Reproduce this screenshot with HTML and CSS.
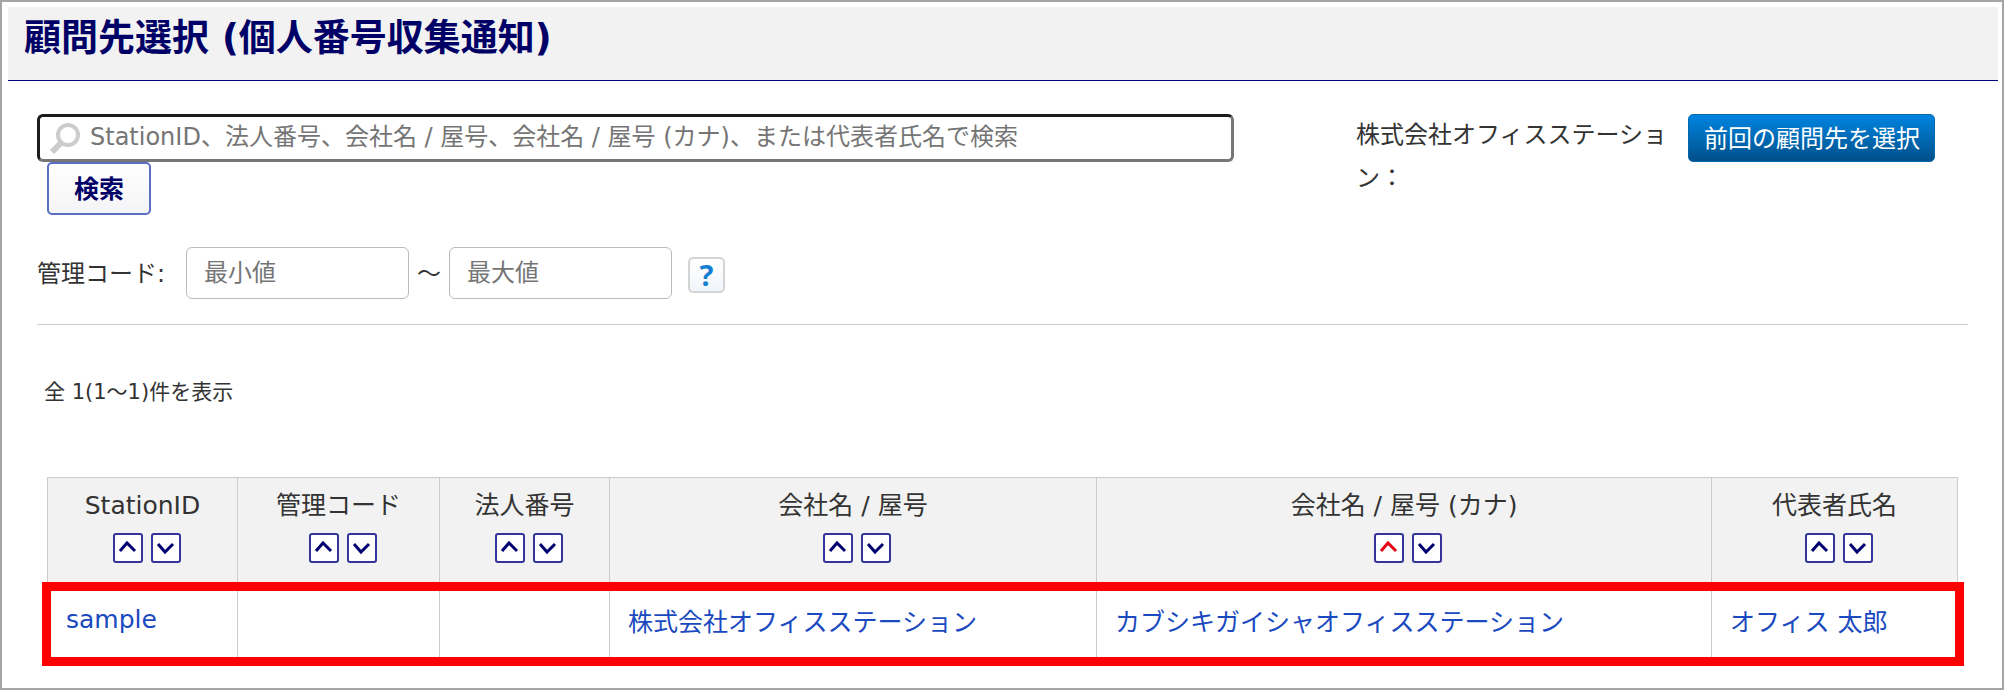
FILE: index.html
```html
<!DOCTYPE html>
<html lang="ja">
<head>
<meta charset="utf-8">
<title>顧問先選択 (個人番号収集通知)</title>
<link rel="stylesheet" href="styles.css">
</head>
<body>
<svg class="sprite" aria-hidden="true">
  <symbol id="up" viewBox="0 0 26 26"><path d="M5 16 12 8 20 16" /></symbol>
  <symbol id="down" viewBox="0 0 26 26"><path d="M5 9 12 17 20 9" /></symbol>
</svg>
<div class="page">
  <header class="title-bar"><h1 class="title">顧問先選択 (個人番号収集通知)</h1></header>
  <main class="content">
    <form class="filters">
      <div class="top-row">
        <div class="search">
          <div class="search-field">
            <svg class="search-icon" viewBox="0 0 32 32" aria-hidden="true"><circle cx="19" cy="12" r="10" /><path d="M12 20 3 29" /></svg>
            <input class="search-input" type="text" aria-label="検索条件" placeholder="StationID、法人番号、会社名 / 屋号、会社名 / 屋号 (カナ)、または代表者氏名で検索">
          </div>
          <button class="search-button" type="button">検索</button>
        </div>
        <div class="previous">
          <p class="previous-name">株式会社オフィスステーション：</p>
          <button class="previous-button" type="button">前回の顧問先を選択</button>
        </div>
      </div>
      <div class="code-row">
        <label class="code-label" for="code-min">管理コード:</label>
        <input class="code-input" id="code-min" type="text" placeholder="最小値">
        <span class="range">～</span>
        <input class="code-input" type="text" aria-label="管理コード 最大値" placeholder="最大値">
        <button class="help" type="button" aria-label="ヘルプ">?</button>
      </div>
    </form>
    <p class="count">全 1(1～1)件を表示</p>
    <table class="clients">
      <colgroup><col class="c-id"><col class="c-code"><col class="c-corp"><col class="c-name"><col class="c-kana"><col class="c-rep"></colgroup>
      <thead>
        <tr>
          <th>StationID<div class="sort"><button type="button" aria-label="昇順"><svg><use href="#up" /></svg></button><button type="button" aria-label="降順"><svg><use href="#down" /></svg></button></div></th>
          <th>管理コード<div class="sort"><button type="button" aria-label="昇順"><svg><use href="#up" /></svg></button><button type="button" aria-label="降順"><svg><use href="#down" /></svg></button></div></th>
          <th>法人番号<div class="sort"><button type="button" aria-label="昇順"><svg><use href="#up" /></svg></button><button type="button" aria-label="降順"><svg><use href="#down" /></svg></button></div></th>
          <th>会社名 / 屋号<div class="sort"><button type="button" aria-label="昇順"><svg><use href="#up" /></svg></button><button type="button" aria-label="降順"><svg><use href="#down" /></svg></button></div></th>
          <th>会社名 / 屋号 (カナ)<div class="sort"><button class="active" type="button" aria-label="昇順"><svg><use href="#up" /></svg></button><button type="button" aria-label="降順"><svg><use href="#down" /></svg></button></div></th>
          <th>代表者氏名<div class="sort"><button type="button" aria-label="昇順"><svg><use href="#up" /></svg></button><button type="button" aria-label="降順"><svg><use href="#down" /></svg></button></div></th>
        </tr>
      </thead>
      <tbody>
        <tr class="highlight">
          <td><a href="#">sample</a></td>
          <td></td>
          <td></td>
          <td><a href="#">株式会社オフィスステーション</a></td>
          <td><a href="#">カブシキガイシャオフィスステーション</a></td>
          <td><a href="#">オフィス 太郎</a></td>
        </tr>
      </tbody>
    </table>
  </main>
</div>
</body>
</html>
```
FILE: styles.css
```css
* {
  box-sizing: border-box;
}

body {
  margin: 0;
  background: #fff;
  color: #333;
  font-family: "DejaVu Sans", "Noto Sans CJK JP", sans-serif;
  font-size: 24px;
}

button,
input {
  margin: 0;
  font: inherit;
}

.sprite {
  display: none;
}

.page {
  min-height: 100vh;
  padding: 5px 4px 0 6px;
  border: 2px solid #a5a5a5;
}

.title-bar {
  padding: 9px 16px 18px;
  background: #f2f2f2;
  border-bottom: 1px solid #000080;
}

.title {
  margin: 0;
  color: #000066;
  font-size: 37px;
  font-weight: 700;
  line-height: 46px;
}

.content {
  padding: 33px 30px 20px 29px;
}

.filters {
  padding-bottom: 25px;
  border-bottom: 1px solid #ccc;
}

.top-row {
  display: flex;
  justify-content: space-between;
  align-items: flex-start;
}

.search {
  width: 62%;
}

.search-field {
  position: relative;
}

.search-icon {
  position: absolute;
  left: 12px;
  top: 9px;
  width: 32px;
  height: 32px;
  fill: none;
  stroke: #ccc;
  stroke-width: 4;
}

.search-icon path {
  stroke-width: 6;
}

.search-input {
  display: block;
  width: 100%;
  height: 48px;
  padding: 0 12px 2px 50px;
  border: 3px solid;
  border-color: #1c1c1c #767676 #767676 #1c1c1c;
  border-radius: 6px;
  background: #fff;
}

.search-input::placeholder,
.code-input::placeholder {
  color: #757575;
}

.search-button {
  display: block;
  width: 104px;
  height: 53px;
  margin-left: 10px;
  padding: 0 0 4px;
  border: 2px solid #5a6fc4;
  border-radius: 5px;
  background: linear-gradient(#fff, #f4f4f6);
  color: #000066;
  font-size: 25px;
  font-weight: 700;
}

.previous {
  display: flex;
  align-items: flex-start;
  gap: 8px;
  padding-right: 33px;
}

.previous-name {
  width: 324px;
  margin: 0;
  line-height: 43px;
  word-break: break-all;
}

.previous-button {
  height: 48px;
  padding: 0 14px 4px 15px;
  border: 1px solid #0468ad;
  border-radius: 5px;
  background: linear-gradient(#0084e0, #00508a);
  color: #fff;
  white-space: nowrap;
}

.code-row {
  display: flex;
  align-items: center;
  margin-top: 32px;
}

.code-label {
  width: 149px;
  padding-bottom: 4px;
}

.code-input {
  width: 223px;
  height: 52px;
  padding: 0 17px;
  border: 1px solid #bbb;
  border-radius: 6px;
  background: #fff;
}

.range {
  width: 40px;
  padding-bottom: 4px;
  text-align: center;
}

.help {
  width: 37px;
  height: 36px;
  margin: 4px 0 0 16px;
  padding: 0;
  border: 2px solid #d4d4d4;
  border-radius: 5px;
  background: linear-gradient(#fff, #f1f6fb);
  color: #147fd0;
  font-family: "Noto Sans", sans-serif;
  font-size: 29px;
  font-weight: 700;
  line-height: 30px;
}

.count {
  margin: 51px 0 0 7px;
  font-size: 21px;
  line-height: 32px;
}

.clients {
  width: calc(100% - 20px);
  margin: 69px 0 0 10px;
  border-collapse: collapse;
  table-layout: fixed;
  font-size: 25px;
}

.c-id {
  width: 190px;
}

.c-code {
  width: 202px;
}

.c-corp {
  width: 170px;
}

.c-name {
  width: 25.5%;
}

.c-rep {
  width: 246px;
}

.clients th {
  padding: 10px 0 24px;
  border: 1px solid #ccc;
  background: #f2f2f2;
  font-weight: 400;
  line-height: 36px;
}

.sort {
  display: flex;
  justify-content: center;
  gap: 8px;
  padding: 9px 0 0 8px;
}

.sort button {
  width: 30px;
  height: 30px;
  padding: 0;
  border: 2px solid #34349a;
  border-radius: 3px;
  background: #fff;
  color: #000070;
}

.sort button.active {
  color: #e60012;
}

.sort svg {
  display: block;
  width: 26px;
  height: 26px;
  fill: none;
  stroke: currentColor;
  stroke-width: 3;
}

.clients td {
  height: 72px;
  padding: 0 16px 8px 18px;
  border: 1px solid #ccc;
}

.clients a {
  color: #1a49c0;
  text-decoration: none;
}

.highlight {
  outline: 9px solid #f00;
  outline-offset: -3px;
}
```
